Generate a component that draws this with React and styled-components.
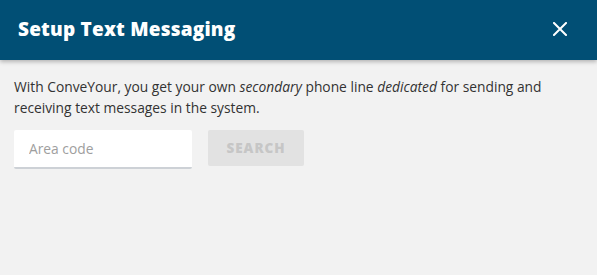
import React from 'react';
import styled, { createGlobalStyle } from 'styled-components';

const Global = createGlobalStyle`
  html, body {
    margin: 0;
    padding: 0;
    background: #f2f2f2;
  }
  body {
    font-family: 'Open Sans', 'Noto Sans', sans-serif;
  }
`;

const SModal = styled.div`
  width: 597px;
  height: 275px;
  background: #f2f2f2;
  display: flex;
  flex-direction: column;
`;

const Header = styled.div`
  height: 60px;
  background: #014f75;
  display: flex;
  align-items: center;
  justify-content: space-between;
  padding: 0 30px 2px 18px;
  box-shadow: 0 2px 4px rgba(0, 0, 0, 0.25);
  box-sizing: border-box;
`;

const Title = styled.h1`
  margin: 0;
  color: #ffffff;
  font-size: 19px;
  font-weight: 800;
  letter-spacing: 0.2px;
`;

const Close = styled.button`
  border: 0;
  background: none;
  padding: 0;
  width: 14px;
  height: 14px;
  display: flex;
  align-items: center;
  justify-content: center;
  cursor: pointer;
`;

const Body = styled.div`
  padding: 16px 14px;
`;

const Paragraph = styled.p`
  margin: 0;
  font-size: 13.8px;
  line-height: 21px;
  color: #333333;
  em {
    font-style: italic;
  }
`;

const Row = styled.div`
  display: flex;
  align-items: flex-start;
  gap: 16px;
  margin-top: 12px;
`;

const Input = styled.input`
  width: 178px;
  height: 39px;
  box-sizing: border-box;
  border: 0;
  border-bottom: 2px solid #cdd1d6;
  border-radius: 2px;
  background: #ffffff;
  padding: 0 15px;
  font-family: inherit;
  font-size: 13.8px;
  color: #333;
  outline: none;
  &::placeholder {
    color: #9e9e9e;
  }
`;

const Button = styled.button`
  width: 96px;
  height: 36px;
  border: 0;
  border-radius: 2px;
  background: #e2e2e2;
  color: #c6c6c6;
  font-family: inherit;
  font-weight: 800;
  font-size: 13.5px;
  letter-spacing: 1px;
`;

const App = () => {
  return (
    <SModal>
      <Global />
      <Header>
        <Title>Setup Text Messaging</Title>
        <Close aria-label='Close'>
          <svg width='14' height='14' viewBox='0 0 14 14'>
            <path d='M1 1L13 13M13 1L1 13' stroke='#fff' strokeWidth='2' strokeLinecap='square' />
          </svg>
        </Close>
      </Header>
      <Body>
        <Paragraph>
          With ConveYour, you get your own <em>secondary</em> phone line <em>dedicated</em> for sending and
          receiving text messages in the system.
        </Paragraph>
        <Row>
          <Input placeholder='Area code' />
          <Button disabled>SEARCH</Button>
        </Row>
      </Body>
    </SModal>
  );
};

export default App;
